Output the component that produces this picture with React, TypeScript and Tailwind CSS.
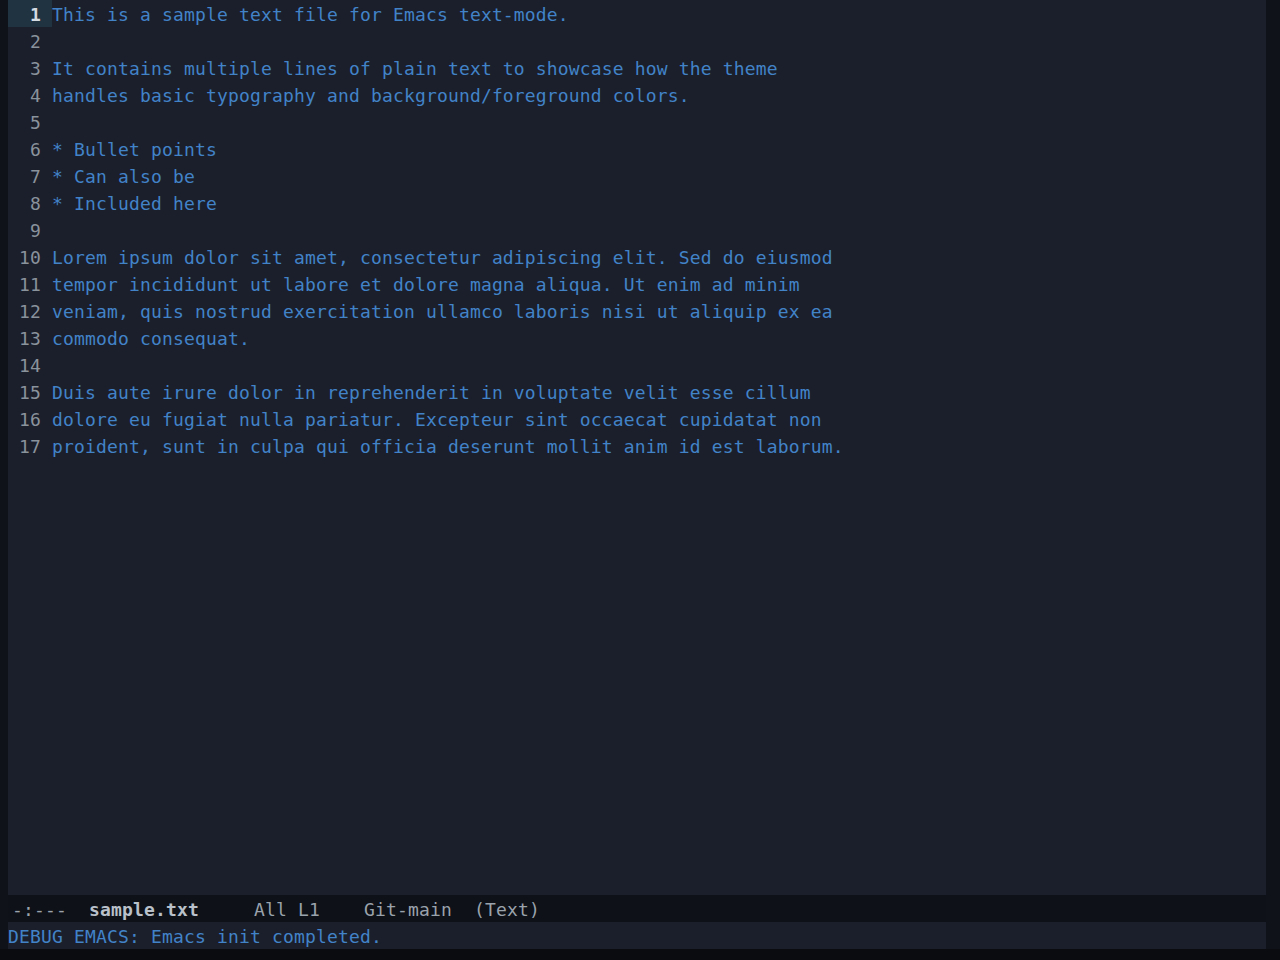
const lines = [
  "This is a sample text file for Emacs text-mode.",
  "",
  "It contains multiple lines of plain text to showcase how the theme",
  "handles basic typography and background/foreground colors.",
  "",
  "* Bullet points",
  "* Can also be",
  "* Included here",
  "",
  "Lorem ipsum dolor sit amet, consectetur adipiscing elit. Sed do eiusmod",
  "tempor incididunt ut labore et dolore magna aliqua. Ut enim ad minim",
  "veniam, quis nostrud exercitation ullamco laboris nisi ut aliquip ex ea",
  "commodo consequat.",
  "",
  "Duis aute irure dolor in reprehenderit in voluptate velit esse cillum",
  "dolore eu fugiat nulla pariatur. Excepteur sint occaecat cupidatat non",
  "proident, sunt in culpa qui officia deserunt mollit anim id est laborum.",
]

const mono = "font-['DejaVu_Sans_Mono',monospace] text-[18px] tracking-[0.16px] leading-[29px] whitespace-pre"

export default function App() {
  return (
    <div className={`w-[1280px] h-[960px] flex flex-col bg-[#0b0c0f] ${mono}`}>
      <div className="flex h-[949px]">
        <div className="w-[8px] bg-[#0f1218]" />
        <div className="flex-1 flex flex-col bg-[#1b1f2b]">
          <div className="flex-1 flex flex-col">
            {lines.map((l, i) => (
              <div key={i} className="flex h-[27px] overflow-hidden">
                <div
                  className={
                    i === 0
                      ? "w-[44px] pr-[11px] text-right font-bold text-[#d3dae2] bg-[#1f3340]"
                      : "w-[44px] pr-[11px] text-right text-[#8a929c]"
                  }
                >
                  {i + 1}
                </div>
                <div className="text-[#4283c8]">{l}</div>
              </div>
            ))}
          </div>
          <div className="h-[27px] overflow-hidden bg-[#0e1117] pl-[4px] text-[#9aa2ac]">
            -:---  <span className="font-bold text-[#b9c0c9]">sample.txt</span>     All L1    Git-main  (Text)
          </div>
          <div className="h-[27px] overflow-hidden text-[#4283c8]">DEBUG EMACS: Emacs init completed.</div>
        </div>
        <div className="w-[14px] bg-[#0f1218]" />
      </div>
      <div className="flex-1 bg-[#0b0c0f]" />
    </div>
  )
}
